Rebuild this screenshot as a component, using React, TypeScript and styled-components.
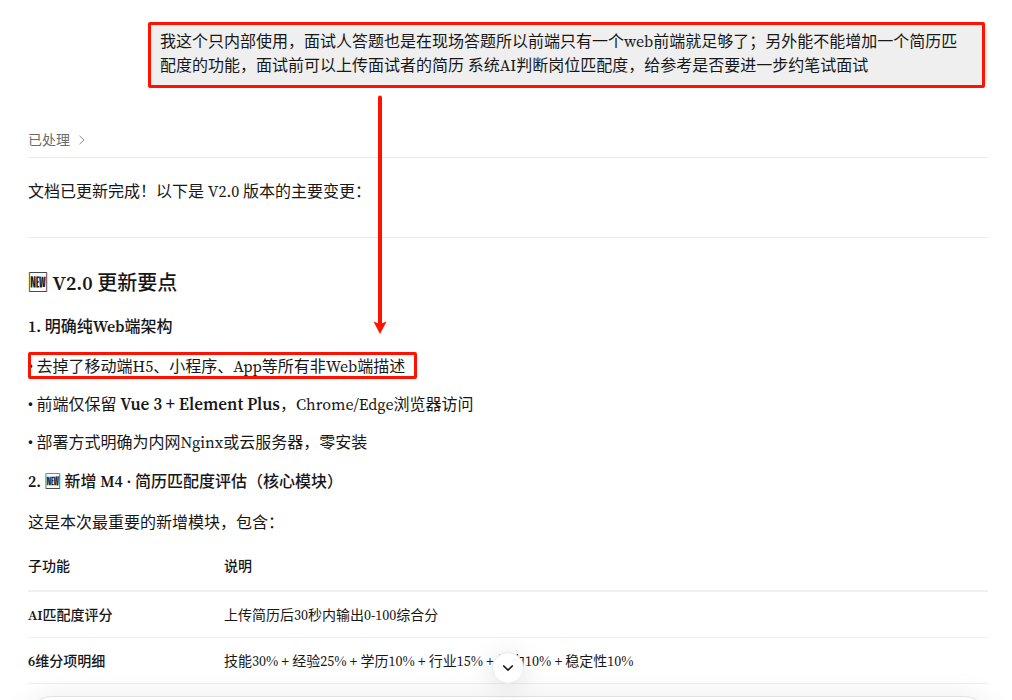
import React from "react";
import styled, { createGlobalStyle } from "styled-components";

const GlobalStyle = createGlobalStyle`
  * { box-sizing: border-box; }
  html, body { margin: 0; background: #fff; }
  body {
    height: 100vh;
    overflow: hidden;
    color: #171717;
    font-family: "Source Serif 4", "Noto Serif", "Liberation Serif", "Noto Sans CJK SC", serif;
    font-size: 16px;
    line-height: 24px;
  }
`;

const Page = styled.main`
  position: relative;
  display: flex;
  flex-direction: column;
  padding: 22px 24px 0 28px;
`;

const UserMessage = styled.div`
  position: relative;
  align-self: flex-end;
  width: 87.5%;
  padding: 7px 12px 11px;
  border-radius: 10px;
  background: #efefef;
`;

const BubbleFrame = styled.span`
  position: absolute;
  inset: 0 3px 0 0;
  border: 3px solid #ff1200;
  border-radius: 2px;
`;

const Status = styled.button`
  display: flex;
  align-items: center;
  gap: 8px;
  margin-top: 36px;
  padding: 3px 0 5px;
  height: 34px;
  border: 0;
  border-bottom: 1px solid #e8e8e8;
  background: none;
  color: #6b6b6b;
  font: inherit;
  font-size: 14px;
  text-align: left;
`;

const Paragraph = styled.p`
  margin: 0;
  padding: 8px 0;
`;

const Intro = styled(Paragraph)`
  padding: 21px 0 34px;
  border-bottom: 1px solid #ececec;
`;

const Title = styled.h2`
  margin: 0;
  padding: 31px 0 15px;
  font-size: 20px;
  line-height: 28px;
  font-weight: 500;
`;

const Heading = styled.h3`
  margin: 0;
  padding: 2px 0 9px;
  font-size: 16px;
  line-height: 24px;
  font-weight: 500;
`;

const NewMark = styled.span`
  font-weight: 900;
`;

const List = styled.ul`
  margin: 0;
  padding: 0 0 6px;
  list-style: none;
`;

const Item = styled.li`
  padding: 7px 0;
  &::before { content: "• "; }
`;

const Marked = styled.span`
  position: relative;
`;

const LineFrame = styled.span`
  position: absolute;
  inset: -3px -12px -2px -9px;
  border: 3px solid #ff1200;
  border-radius: 2px;
`;

const Strong = styled.strong`
  font-size: 17px;
  font-weight: 600;
`;

const Latin = styled.span`
  font-weight: 600;
`;

const Table = styled.table`
  width: 100%;
  border-collapse: collapse;
  table-layout: fixed;
  font-size: 14px;
  line-height: 22px;
  text-align: left;
  th { font-weight: 500; padding: 12px 0 11px; }
  td { padding: 12px 0 11px; }
  thead th { padding: 13px 0 13px; border-bottom: 2px solid #efefef; }
  tbody tr { border-bottom: 1px solid #f0f0f0; }
`;

const NameColumn = styled.col`
  width: 196px;
`;

const Arrow = styled.svg`
  position: absolute;
  left: 372px;
  top: 95px;
`;

const Composer = styled.footer`
  position: fixed;
  left: 28px;
  right: 24px;
  bottom: -68px;
  height: 72px;
  border: 1px solid #e2e2e2;
  border-radius: 24px;
  background: #fff;
  box-shadow: 0 0 30px rgba(0, 0, 0, 0.08);
`;

const ScrollButton = styled.button`
  position: fixed;
  left: calc(50% + 2px);
  bottom: 16px;
  display: grid;
  place-items: center;
  width: 32px;
  height: 32px;
  margin-left: -16px;
  padding: 0;
  border: 1px solid #e8e8e8;
  border-radius: 50%;
  background: #fff;
  color: #171717;
  box-shadow: 0 4px 28px rgba(0, 0, 0, 0.12);
`;

const features = [
  { lead: "AI", name: "匹配度评分", text: "上传简历后30秒内输出0-100综合分" },
  { lead: "6", name: "维分项明细", text: "技能30% + 经验25% + 学历10% + 行业15% + 能力10% + 稳定性10%" },
];

export default function App() {
  return (
    <>
      <GlobalStyle />
      <Page>
        <UserMessage>
          我这个只内部使用，面试人答题也是在现场答题所以前端只有一个web前端就足够了；另外能不能增加一个简历匹
          <br />
          配度的功能，面试前可以上传面试者的简历 系统AI判断岗位匹配度，给参考是否要进一步约笔试面试
          <BubbleFrame />
        </UserMessage>
        <Status type="button">
          已处理
          <svg width="8" height="10" viewBox="0 0 8 10" fill="none" stroke="#8a8a8a" aria-hidden="true">
            <path d="M1.5 .8 6 5 1.5 9.2" />
          </svg>
        </Status>
        <Intro>文档已更新完成！以下是 V2.0 版本的主要变更：</Intro>
        <Title>
          <NewMark>🆕</NewMark> <Latin>V2.0</Latin> 更新要点
        </Title>
        <Heading>
          <Latin>1.</Latin> 明确纯<Latin>Web</Latin>端架构
        </Heading>
        <List>
          <Item>
            <Marked>
              去掉了移动端H5、小程序、App等所有非Web端描述
              <LineFrame />
            </Marked>
          </Item>
          <Item>
            前端仅保留 <Strong>Vue 3 + Element Plus</Strong>，Chrome/Edge浏览器访问
          </Item>
          <Item>部署方式明确为内网Nginx或云服务器，零安装</Item>
        </List>
        <Heading>
          <Latin>2.</Latin> <NewMark>🆕</NewMark> 新增 <Latin>M4 ·</Latin> 简历匹配度评估（核心模块）
        </Heading>
        <Paragraph>这是本次最重要的新增模块，包含：</Paragraph>
        <Table>
          <colgroup>
            <NameColumn />
            <col />
          </colgroup>
          <thead>
            <tr>
              <th scope="col">子功能</th>
              <th scope="col">说明</th>
            </tr>
          </thead>
          <tbody>
            {features.map(({ lead, name, text }) => (
              <tr key={name}>
                <th scope="row">
                  <Latin>{lead}</Latin>
                  {name}
                </th>
                <td>{text}</td>
              </tr>
            ))}
          </tbody>
        </Table>
        <Arrow width="16" height="240" viewBox="0 0 16 240" aria-hidden="true">
          <path d="M8 2.5V230" stroke="#ff1200" strokeWidth="4" strokeLinecap="round" />
          <path d="M1.5 226.500 8 229 14.500 226.500 8 239Z" fill="#ff1200" />
        </Arrow>
      </Page>
      <Composer />
      <ScrollButton type="button" aria-label="滚动到底部">
        <svg width="12" height="8" viewBox="0 0 12 8" fill="none" stroke="currentColor" strokeWidth="1.7" aria-hidden="true">
          <path d="M1.200 1.500 6 6l4.800-4.500" />
        </svg>
      </ScrollButton>
    </>
  );
}
